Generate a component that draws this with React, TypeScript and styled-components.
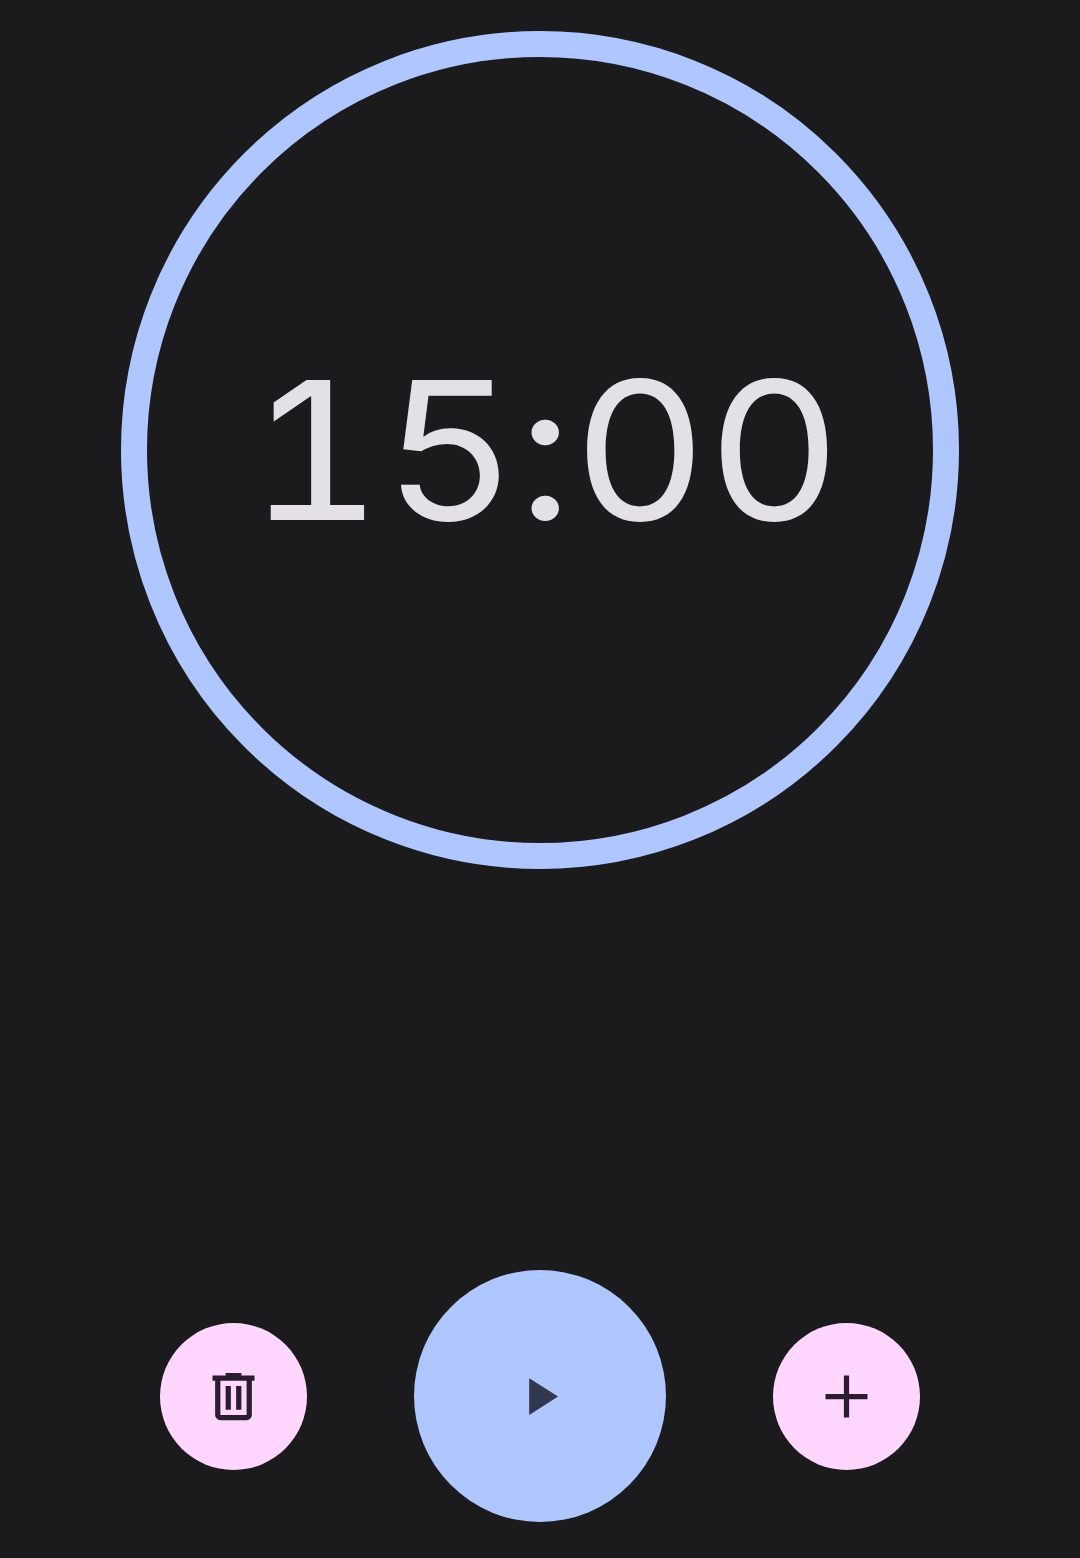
import { FunctionComponent } from "react";
import styled, { createGlobalStyle } from "styled-components";

const GlobalStyle = createGlobalStyle`
  body {
    margin: 0;
    background-color: #1b1b1d;
  }
`;
const Screen = styled.div`
  width: 1080px;
  height: 1558px;
  box-sizing: border-box;
  padding: 31px 0 36px;
  display: flex;
  flex-direction: column;
  align-items: center;
  justify-content: space-between;
  overflow: hidden;
`;
const TimerRing = styled.div`
  width: 838px;
  height: 838px;
  box-sizing: border-box;
  border: 26px solid #b0c6ff;
  border-radius: 50%;
  display: flex;
  align-items: center;
  justify-content: center;
`;
const TimeText = styled.div`
  font-family: Inter, "Liberation Sans", sans-serif;
  font-feature-settings: "tnum", "calt" 0;
  font-size: 192px;
  font-weight: 400;
  line-height: 1;
  color: #e3e1e6;
  transform: translateX(5px) scaleX(1.08);
`;
const Controls = styled.div`
  display: flex;
  align-items: center;
  justify-content: center;
  gap: 107px;
`;
const RoundButton = styled.button<{ $primary?: boolean }>`
  width: ${(p) => (p.$primary ? "252px" : "147px")};
  height: ${(p) => (p.$primary ? "252px" : "147px")};
  border: 0;
  border-radius: 50%;
  padding: 0;
  display: flex;
  align-items: center;
  justify-content: center;
  background-color: ${(p) => (p.$primary ? "#b0c6ff" : "#ffd6fe")};
  color: ${(p) => (p.$primary ? "#32374f" : "#2b1d30")};
`;
const Icon = styled.svg`
  width: 63px;
  height: 63px;
  fill: currentColor;
`;

const App: FunctionComponent = () => {
  return (
    <Screen>
      <GlobalStyle />
      <TimerRing>
        <TimeText>15:00</TimeText>
      </TimerRing>
      <Controls>
        <RoundButton aria-label="Delete">
          <Icon viewBox="0 -960 960 960">
            <path d="M280-120q-33 0-56.5-23.5T200-200v-520h-40v-80h200v-40h240v40h200v80h-40v520q0 33-23.5 56.5T680-120H280Zm400-600H280v520h400v-520ZM360-280h80v-360h-80v360Zm160 0h80v-360h-80v360Z" />
          </Icon>
        </RoundButton>
        <RoundButton $primary aria-label="Start">
          <Icon viewBox="0 0 24 24">
            <path d="M7.7 5v14l11-7z" />
          </Icon>
        </RoundButton>
        <RoundButton aria-label="Add">
          <Icon viewBox="0 -960 960 960">
            <path d="M440-440H160v-80h280v-280h80v280h280v80H520v280h-80v-280Z" />
          </Icon>
        </RoundButton>
      </Controls>
    </Screen>
  );
};

export default App;
